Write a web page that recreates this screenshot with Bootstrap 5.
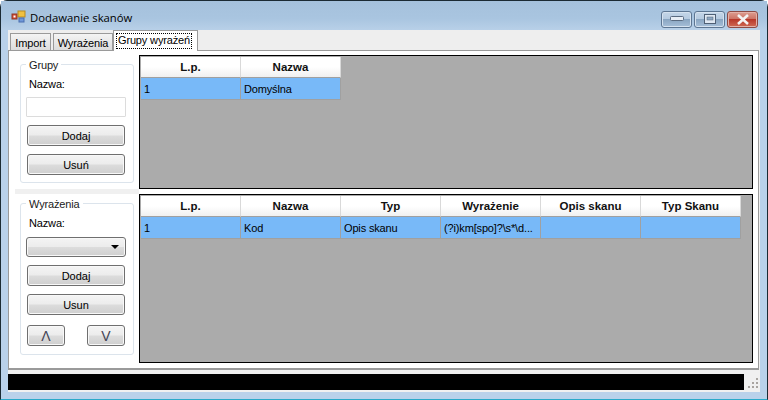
<!DOCTYPE html>
<html lang="pl"><head><meta charset="utf-8"><title>Dodawanie skanów</title>
<link href="https://cdn.jsdelivr.net/npm/bootstrap@5.3.0/dist/css/bootstrap.min.css" rel="stylesheet">
<style>
html,body{width:768px;height:400px;overflow:hidden;margin:0;background:#fff}
body{font-family:"Liberation Sans",Arial,sans-serif;font-size:11px;letter-spacing:-.15px;line-height:14px;color:#000}
.win{width:768px;height:400px;border:1px solid #1b2a33;border-bottom-color:#2aa9c9;border-radius:7px 7px 0 0;background-color:#b9d1ea;padding:0 7px 7px;display:flex;flex-direction:column}
.ttl{height:29px;flex:none;display:flex;align-items:center;margin:0 -7px;padding:0 0 0 6px;background:linear-gradient(180deg,#a5c1dc 0,#a9c5e0 60%,#b8d0e8 100%)}
.ttl-txt{font-family:"Open Sans",sans-serif;font-size:11.3px;letter-spacing:0;margin-left:3px;padding-top:5px}
.cap{display:flex;gap:2px;margin-left:auto;margin-top:7px;padding-right:9px}
.capb{height:17px;border:1px solid #5d7692;border-radius:3px;background:linear-gradient(180deg,#c4d6e8 0,#b6cbe0 45%,#8aa6c2 50%,#a6bfd8 100%);display:flex;align-items:center;justify-content:center;box-shadow:inset 0 0 0 1px #d5e2ef}
.capm{width:31px}.capx{width:31px;background:linear-gradient(180deg,#dd9d90 0,#cd7466 45%,#b8382a 50%,#cf6a55 100%);border-color:#8d4a44;box-shadow:inset 0 0 0 1px #e3b1a8}
.client{flex:1;background:#f0f0f0;display:flex;flex-direction:column;min-height:0}
.tabs{height:20px;flex:none;display:flex;align-items:flex-end;padding-left:2px;gap:2px;background:#eee}
.tb{height:17px;border:1px solid #9a9a9a;border-bottom:0;background:linear-gradient(180deg,#f4f4f4,#dcdcdc);white-space:nowrap;text-align:center;padding-top:2px}
.tb1{width:41px}.tb2{width:60px}
.tb-on{width:85px;height:21px;margin-left:-2px;background:#fff;position:relative;z-index:1;margin-bottom:-1px;padding:2px 0 0 2px}
.tb-on span{outline:1px dotted #000;outline-offset:-1px;display:block;padding-top:0;height:16px;width:76px}
.pg{height:320px;flex:none;width:751px;border:1px solid #9a9a9a;border-bottom-width:2px;background:#fff;padding:4px 6px 5px 6px;display:flex;flex-direction:column}
.pane{display:flex;gap:5px;flex:none}
.pane1{height:134px}.pane2{height:169px}
.split{height:5px;flex:none;background:#f0f0f0;width:124px}
.lft{width:119px;flex:none;padding:9px 0 6px 5px;display:flex}
.pane2 .lft{padding-bottom:8px}
.fs{width:114px;border:1px solid #dce4ec;border-radius:3px;padding:0 6px 0 5px;position:relative;flex:none;display:flex;flex-direction:column;align-items:flex-start}
.lg{position:absolute;top:-7px;left:5px;background:#fff;padding:0 3px;color:#1b1b1b}
.lb{margin:12px 0 0 3px;height:14px}
.inp{width:100px;height:20px;border:1px solid #dcdcdc;margin-top:6px;border-radius:1px;background:#fff;flex:none}
.wb{width:98px;height:21px;flex:none;margin:8px 0 0 1px;border:1px solid #6f6f6f;border-radius:3px;background:linear-gradient(180deg,#f4f4f4 0,#ececec 48%,#dcdcdc 52%,#cfcfcf 100%);display:flex;align-items:center;justify-content:center;box-shadow:inset 0 0 0 1px #f8f8f8;color:#000;padding:0}
.sel{width:100px;height:20px;flex:none;margin:7px 0 0 0;border:1px solid #6f6f6f;border-radius:3px;background:linear-gradient(180deg,#f4f4f4 0,#ececec 48%,#dcdcdc 52%,#cfcfcf 100%);box-shadow:inset 0 0 0 1px #f8f8f8;display:flex;align-items:center;justify-content:flex-end;padding-right:6px}
.car{width:0;height:0;border:4px solid transparent;border-top:4px solid #000;border-bottom:0}
.arr{display:flex;justify-content:space-between;width:98px;margin-left:1px;margin-top:2px}
.wb-s{width:38px;margin-left:0;font-size:14px;color:#445}
.dg{border:1px solid #000;background:#ababab;padding:1px;width:614px;flex:none}
.hd,.rw{display:flex}
.hc{width:100px;height:21px;background:linear-gradient(180deg,#fff 0,#fff 50%,#f0f0f0 100%);border-right:1px solid #d9d9d9;border-bottom:1px solid #a0a0a0;font-weight:700;font-size:11.5px;letter-spacing:0;display:flex;align-items:center;justify-content:center;color:#111}
.rc{width:100px;height:22px;background:#78b9f8;border-right:1px solid #a0a0a0;border-bottom:1px solid #a0a0a0;display:flex;align-items:center;padding:1px 0 0 3px;white-space:nowrap;overflow:hidden}
.stb{height:22px;flex:none;width:752px;background:#f0f0f0;padding:4px 0 2px 0;display:flex}
.blk{width:736px;background:#000;flex:none;height:16px}
.grip{flex:1;display:flex;align-items:flex-end;justify-content:flex-end}
</style></head><body>
<div class="win">
 <div class="ttl">
  <svg width="16" height="16" viewBox="0 0 16 16" class="ms-1"><rect x="1" y="6" width="5" height="5" fill="#d2462f" stroke="#8f3a2a"/><rect x="2.5" y="7.5" width="2" height="2" fill="#fff"/><rect x="7" y="3" width="7" height="6" fill="#f0c040" stroke="#b98a20"/><rect x="8" y="10" width="5" height="4" fill="#6f97d8" stroke="#4a6fb0"/></svg>
  <span class="ttl-txt">Dodawanie skanów</span>
  <div class="cap"><div class="capb capm"><svg width="14" height="6"><rect x=".5" y=".5" width="13" height="4" rx="1" fill="#e8eef5" stroke="#5a6b80"/></svg></div><div class="capb capm"><svg width="12" height="10"><rect x=".5" y=".5" width="11" height="9" fill="#dfe8f2" stroke="#4f6075"/><rect x="3" y="3" width="6" height="3" fill="#8fa8c2" stroke="#4f6075" stroke-width=".5"/></svg></div><div class="capb capx"><svg width="14" height="11" viewBox="0 0 14 11"><path d="M2 1 7 5.5 12 1M2 10 7 5.5 12 10" fill="none" stroke="#f4f4f4" stroke-width="2.6"/></svg></div></div>
 </div>
 <div class="client">
  <div class="tabs"><div class="tb tb1">Import</div><div class="tb tb2">Wyrażenia</div><div class="tb tb-on"><span>Grupy wyrażeń</span></div></div>
  <div class="pg">
   <div class="pane pane1">
    <div class="lft"><div class="fs"><span class="lg">Grupy</span><div class="lb">Nazwa:</div><div class="inp"></div><button class="wb" type="button">Dodaj</button><button class="wb" type="button">Usuń</button></div></div>
    <div class="dg"><div class="hd"><div class="hc">L.p.</div><div class="hc">Nazwa</div></div><div class="rw"><div class="rc">1</div><div class="rc">Domyślna</div></div></div>
   </div>
   <div class="split"></div>
   <div class="pane pane2">
    <div class="lft"><div class="fs"><span class="lg">Wyrażenia</span><div class="lb">Nazwa:</div><div class="sel"><span class="car"></span></div><button class="wb" type="button">Dodaj</button><button class="wb" type="button">Usun</button><div class="arr"><button class="wb wb-s" type="button">Λ</button><button class="wb wb-s" type="button">V</button></div></div></div>
    <div class="dg"><div class="hd"><div class="hc">L.p.</div><div class="hc">Nazwa</div><div class="hc">Typ</div><div class="hc">Wyrażenie</div><div class="hc">Opis skanu</div><div class="hc">Typ Skanu</div></div><div class="rw"><div class="rc">1</div><div class="rc">Kod</div><div class="rc">Opis skanu</div><div class="rc">(?i)km[spo]?\s*\d...</div><div class="rc"></div><div class="rc"></div></div></div>
   </div>
  </div>
  <div class="stb"><div class="blk"></div><div class="grip"><svg width="12" height="12" viewBox="0 0 12 12" fill="#a8a4a0"><rect x="8" y="0" width="2" height="2"/><rect x="4" y="4" width="2" height="2"/><rect x="8" y="4" width="2" height="2"/><rect x="0" y="8" width="2" height="2"/><rect x="4" y="8" width="2" height="2"/><rect x="8" y="8" width="2" height="2"/></svg></div></div>
 </div>
</div>
</body></html>
